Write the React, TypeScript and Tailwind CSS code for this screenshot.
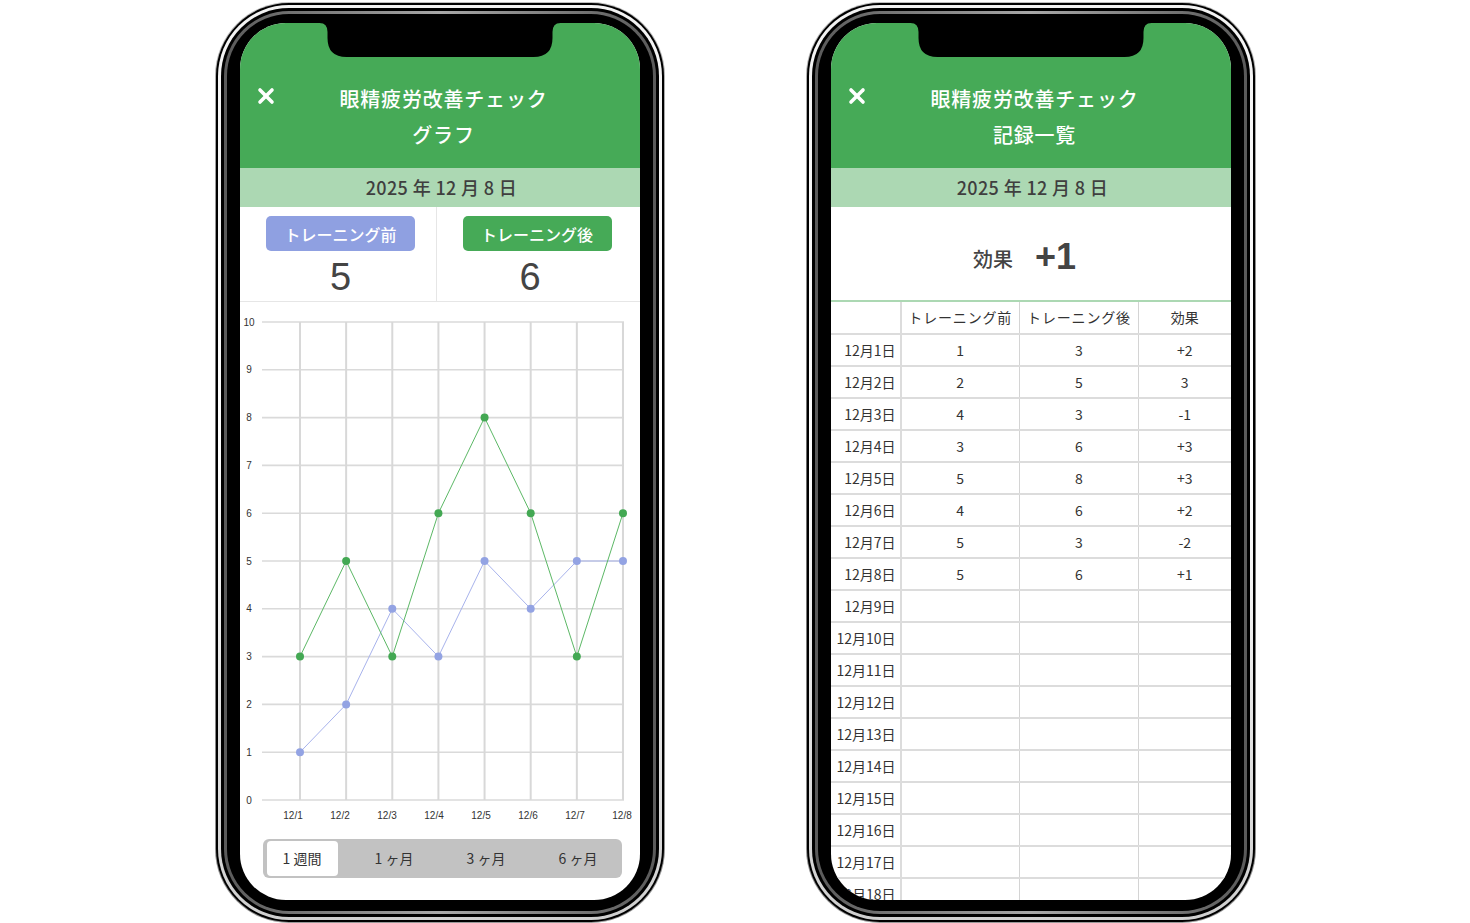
import React from 'react';
import { X } from 'lucide-react';

const before = [1, 2, 4, 3, 5, 4, 5, 5];
const after = [3, 5, 3, 6, 8, 6, 3, 6];

const gx = (i: number) => 60 + i * 46.14;
const gy = (v: number) => 498 - v * 47.8;

const Notch = () => (
  <svg className="absolute left-1/2 top-0 -translate-x-1/2 z-10" width="241" height="34" viewBox="0 0 241 34">
    <path d="M0 0 H241 Q233 0 233 9 V15 Q233 34 214 34 H27 Q8 34 8 15 V9 Q8 0 0 0 Z" fill="#000" />
  </svg>
);

const Phone: React.FC<{ title: string; children: React.ReactNode }> = ({ title, children }) => (
  <div className="w-[450px] h-[921px] rounded-[74px] bg-gradient-to-b from-[#bdbdbd] via-[#6a6a6a] to-[#9a9a9a] p-[1px]">
    <div className="h-full rounded-[73px] bg-black p-[2px]">
      <div className="h-full rounded-[71px] p-[3px] bg-gradient-to-b from-[#f2f2f2] via-[#ffffff] to-[#cfcfcf]">
        <div className="h-full rounded-[68px] bg-black p-[3px]">
          <div className="h-full rounded-[65px] p-[3px] bg-gradient-to-r from-[#5a5a5a] via-[#a8a8a8] to-[#5a5a5a]">
            <div className="h-full rounded-[62px] bg-black pt-[9px] pb-[11px] px-[13px]">
              <div className="relative w-[400px] h-[877px] rounded-[46px] overflow-hidden bg-white">
                <Notch />
                <header className="relative h-[145px] bg-[#46aa57] text-white pt-[58px]">
                  <X className="absolute left-[14px] top-[61px]" size={24} strokeWidth={3.6} />
                  <div className="text-center text-[20px] leading-[36px] font-medium tracking-[0.04em] pl-[8px]">
                    <div>眼精疲労改善チェック</div>
                    <div>{title}</div>
                  </div>
                </header>
                <div className="h-[39px] bg-[#acd8b3] flex items-center justify-center text-[18px] font-medium text-[#3f3f3f] tracking-[0.02em] pl-[4px]">
                  2025 年 12 月 8 日
                </div>
                {children}
              </div>
            </div>
          </div>
        </div>
      </div>
    </div>
  </div>
);

const Chart = () => (
  <svg width="400" height="537" className="block" style={{ fontFamily: '"Liberation Sans", Arial, sans-serif' }}>
    {Array.from({ length: 11 }, (_, v) => (
      <g key={v}>
        <line x1={22} x2={384} y1={gy(v)} y2={gy(v)} stroke="#dadada" strokeWidth={1.6} />
        <text x={9} y={gy(v) + 3.5} fontSize={10} fill="#333" textAnchor="middle">{v}</text>
      </g>
    ))}
    {before.map((_, i) => (
      <line key={i} x1={gx(i)} x2={gx(i)} y1={gy(10)} y2={gy(0)} stroke="#d8d8d8" strokeWidth={2} />
    ))}
    {before.map((_, i) => (
      <text key={i} x={53 + i * 47} y={517} fontSize={10} fill="#333" textAnchor="middle">{`12/${i + 1}`}</text>
    ))}
    <polyline points={before.map((v, i) => `${gx(i)},${gy(v)}`).join(' ')} fill="none" stroke="#a8b3ec" strokeWidth={1} />
    <polyline points={after.map((v, i) => `${gx(i)},${gy(v)}`).join(' ')} fill="none" stroke="#5cb866" strokeWidth={1} />
    {before.map((v, i) => (
      <circle key={i} cx={gx(i)} cy={gy(v)} r={4} fill="#93a3e3" />
    ))}
    {after.map((v, i) => (
      <circle key={i} cx={gx(i)} cy={gy(v)} r={4} fill="#43a853" />
    ))}
  </svg>
);

const GraphScreen = () => (
  <>
    <div className="h-[95px] flex border-b border-[#e6e6e6]">
      <div className="w-[197px] border-r border-[#e6e6e6] flex flex-col items-center pt-[9px] pl-[6px]">
        <div className="w-[149px] h-[35px] rounded-[5px] bg-[#8fa0e1] text-white text-[16px] font-medium flex items-center justify-center">
          トレーニング前
        </div>
        <div className="text-[38px] leading-[46px] mt-[3px] text-[#444]" style={{ fontFamily: '"Liberation Sans", Arial, sans-serif' }}>5</div>
      </div>
      <div className="flex-1 flex flex-col items-center pt-[9px] pr-[2px]">
        <div className="w-[149px] h-[35px] rounded-[5px] bg-[#46aa57] text-white text-[16px] font-medium flex items-center justify-center">
          トレーニング後
        </div>
        <div className="text-[38px] leading-[46px] mt-[3px] text-[#444] pr-[14px]" style={{ fontFamily: '"Liberation Sans", Arial, sans-serif' }}>6</div>
      </div>
    </div>
    <Chart />
    <div className="ml-[23px] w-[359px] h-[39px] rounded-[6px] bg-[#c2c2c2] flex items-center pl-[4px] gap-[21px] text-[14px] text-[#333]">
      {['1 週間', '1 ヶ月', '3 ヶ月', '6 ヶ月'].map((t, i) => (
        <div
          key={t}
          className={
            i === 0
              ? 'w-[71px] h-[35px] rounded-[4px] bg-white flex items-center justify-center'
              : 'w-[71px] h-[35px] flex items-center justify-center'
          }
        >
          {t}
        </div>
      ))}
    </div>
  </>
);

const rows: { d: string; b?: string; a?: string; e?: string }[] = [
  { d: '12月1日', b: '1', a: '3', e: '+2' },
  { d: '12月2日', b: '2', a: '5', e: '3' },
  { d: '12月3日', b: '4', a: '3', e: '-1' },
  { d: '12月4日', b: '3', a: '6', e: '+3' },
  { d: '12月5日', b: '5', a: '8', e: '+3' },
  { d: '12月6日', b: '4', a: '6', e: '+2' },
  { d: '12月7日', b: '5', a: '3', e: '-2' },
  { d: '12月8日', b: '5', a: '6', e: '+1' },
  ...Array.from({ length: 10 }, (_, i) => ({ d: `12月${i + 9}日` })),
];

const ListScreen = () => (
  <>
    <div className="h-[95px] border-b-2 border-[#acd8b3] flex items-center justify-center pt-[6px] pr-[12px] text-[#444]">
      <span className="text-[20px] font-medium mr-[22px] mt-[4px]">効果</span>
      <span className="text-[36px] font-bold leading-none" style={{ fontFamily: '"Liberation Sans", Arial, sans-serif' }}>+1</span>
    </div>
    <table className="w-[400px] border-collapse text-[14px] text-[#333] table-fixed">
      <colgroup>
        <col className="w-[70px]" />
        <col className="w-[119px]" />
        <col className="w-[119px]" />
        <col className="w-[92px]" />
      </colgroup>
      <thead>
        <tr className="h-[32px] border-b-2 border-[#dcdcdc]">
          <th className="border-r-2 border-[#dcdcdc]"></th>
          <th className="font-normal border-r border-[#d4d4d4] tracking-[0.06em]">トレーニング前</th>
          <th className="font-normal border-r border-[#d4d4d4] tracking-[0.06em]">トレーニング後</th>
          <th className="font-normal">効果</th>
        </tr>
      </thead>
      <tbody>
        {rows.map((r) => (
          <tr key={r.d} className="h-[32px] border-b-2 border-[#dcdcdc]">
            <td className="border-r-2 border-[#dcdcdc] text-right pr-[4px] whitespace-nowrap">{r.d}</td>
            <td className="text-center border-r border-[#d4d4d4]">{r.b}</td>
            <td className="text-center border-r border-[#d4d4d4]">{r.a}</td>
            <td className="text-center">{r.e}</td>
          </tr>
        ))}
      </tbody>
    </table>
  </>
);

export default function App() {
  return (
    <div
      className="w-[1470px] h-[923px] bg-white flex justify-center items-start gap-[141px] pt-[2px] overflow-hidden"
      style={{ fontFamily: '"Noto Sans CJK JP", "Noto Sans", sans-serif' }}
    >
      <Phone title="グラフ">
        <GraphScreen />
      </Phone>
      <Phone title="記録一覧">
        <ListScreen />
      </Phone>
    </div>
  );
}
